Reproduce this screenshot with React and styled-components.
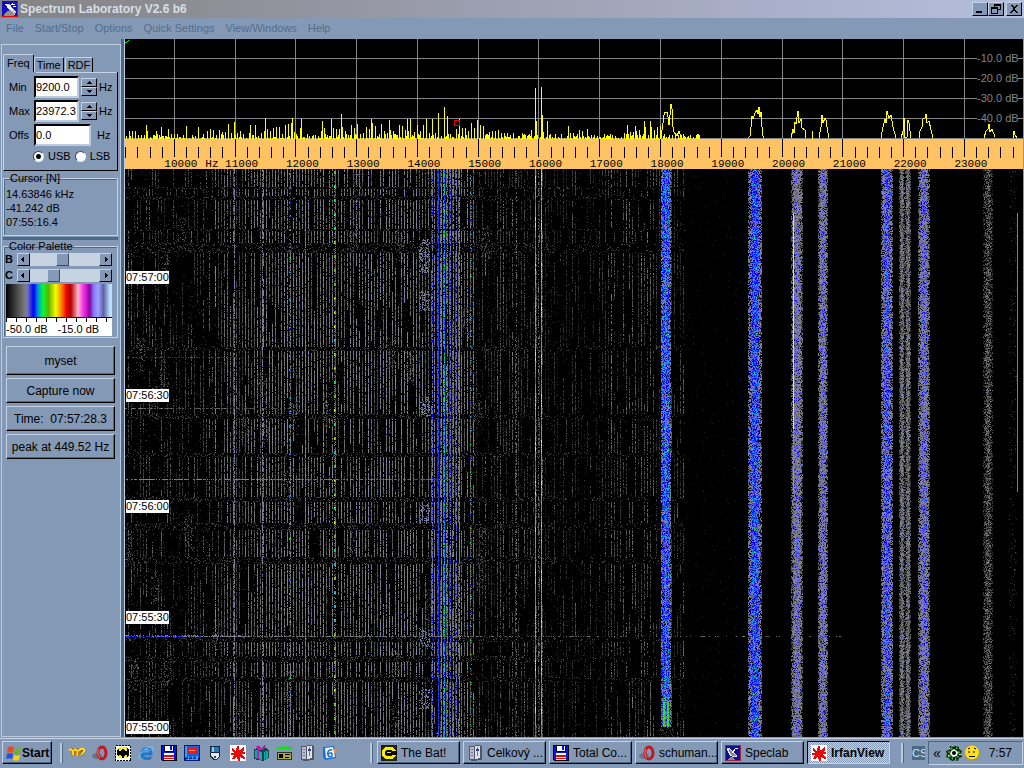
import { useMemo, useState } from 'react';
import styled, { createGlobalStyle } from 'styled-components';

const GlobalStyle = createGlobalStyle`
    * {
        box-sizing: border-box;
    }
    body {
        margin: 0;
        background: #8499b5;
        font-family: "Liberation Sans", Arial, sans-serif;
        font-size: 11px;
        color: black;
    }
    button, input {
        font-family: inherit;
        font-size: inherit;
        color: inherit;
    }
`

const Window = styled.div`
    min-height: 100vh;
    display: flex;
    flex-direction: column;
`
const TitleBar = styled.header`
    height: 18px;
    display: flex;
    align-items: center;
    padding: 0 2px;
    gap: 2px;
    background: linear-gradient(90deg, #848284, #b5bede);
`
const Title = styled.h1`
    margin: 0;
    flex: 1;
    font-size: 12px;
    line-height: 16px;
    color: #d6dfe7;
`
const Controls = styled.div`
    display: flex;
`
const ControlButton = styled.button`
    width: 16px;
    height: 14px;
    padding: 0;
    margin-left: ${ ({ $apart }) => ($apart ? 2 : 0) }px;
    display: flex;
    background: #8499b5;
    border: 1px solid;
    border-color: #c6d3e7 black black #c6d3e7;
`
const MenuBar = styled.nav`
    height: 21px;
    display: flex;
    align-items: center;
    gap: 11px;
    padding: 0 6px 2px;
`
const MenuItem = styled.button`
    padding: 0;
    border: 0;
    background: none;
    color: #526d8c;
    white-space: nowrap;
`
const Main = styled.main`
    flex: 1;
    display: flex;
`

/* ---------- side panel ---------- */

const Side = styled.aside`
    width: 125px;
    flex-shrink: 0;
    padding-right: 4px;
    background: linear-gradient(90deg, #8499b5 121px, #4a6984 121px, #4a6984 124px, #bdcbde 124px);
`
const Panel = styled.div`
    height: calc(100% - 5px);
    margin-left: 1px;
    margin-top: 5px;
    padding: 9px 2px 0 1px;
    border: 1px solid #bdcbde;
`
const Tabs = styled.div`
    display: flex;
    align-items: flex-end;
`
const Tab = styled.button`
    height: ${ ({ $active }) => ($active ? 18 : 15) }px;
    padding: ${ ({ $active }) => ($active ? '0 3px 2px' : '0 2px') };
    margin-right: ${ ({ $active }) => ($active ? 0 : 1) }px;
    border: 1px solid;
    border-color: #c6d3e7 black transparent #c6d3e7;
    border-bottom: 0;
    border-radius: 2px 2px 0 0;
    background: #8499b5;
`
const TabPage = styled.div`
    height: 99px;
    padding: 4px 0 0 5px;
    display: flex;
    flex-direction: column;
    gap: 2px;
    border-left: 1px solid #c6d3e7;
    border-right: 1px solid black;
    border-bottom: 1px solid black;
    background: linear-gradient(#c6d3e7, #c6d3e7) 32px 0 / 82px 1px no-repeat;
`
const Field = styled.div`
    height: 22px;
    display: flex;
    align-items: center;
`
const FieldLabel = styled.label`
    width: 25px;
`
const TextBox = styled.input`
    width: ${ ({ $wide }) => ($wide ? 57 : 45) }px;
    height: 22px;
    padding: 0 0 1px;
    background: white;
    border: 2px solid;
    border-color: black #bdcbde #bdcbde black;
    outline: 0;
`
const Spinner = styled.div`
    width: 16px;
    margin: 0 2px;
    display: flex;
    flex-direction: column;
`
const SpinButton = styled.button`
    height: 9px;
    padding: 0;
    display: flex;
    align-items: center;
    justify-content: center;
    background: #8499b5;
    border: 1px solid;
    border-color: #c6d3e7 black black #c6d3e7;
`
const Unit = styled.span`
    margin-left: ${ ({ $far }) => ($far ? 6 : 0) }px;
`
const RadioRow = styled.div`
    display: flex;
    gap: 4px;
    padding: 2px 0 0 24px;
`
const RadioLabel = styled.label`
    display: flex;
    align-items: center;
    gap: 4px;
`
const Radio = styled.input`
    appearance: none;
    width: 11px;
    height: 11px;
    margin: 0;
    border-radius: 50%;
    border: 1px solid;
    border-color: #39495a #e7efff #e7efff #39495a;
    background: ${ ({ checked }) => (checked ? 'radial-gradient(black 2px, white 3px)' : 'white') };
`
const Group = styled.fieldset`
    min-width: 0;
    margin: 0;
    padding: ${ ({ $tight }) => ($tight ? '0 5px 1px 1px' : '2px 2px 6px') };
    border: 1px solid #c6d3e7;
    box-shadow: inset 1px 1px 0 #4a6984;
`
const Legend = styled.legend`
    margin-left: 3px;
    padding: 0 1px;
    height: ${ ({ $tight }) => ($tight ? 10 : 14) }px;
    line-height: ${ ({ $tight }) => ($tight ? 10 : 14) }px;
`
const Readout = styled.p`
    margin: 0;
    line-height: 14px;
`
const Divider = styled.div`
    height: 3px;
    margin: 1px 0;
    background: #4a6984;
`
const SliderRow = styled.div`
    height: 16px;
    display: flex;
    align-items: center;
`
const SliderLabel = styled.label`
    width: 12px;
    font-weight: bold;
`
const ArrowButton = styled.button`
    width: 13px;
    height: 13px;
    padding: 0;
    display: flex;
    align-items: center;
    justify-content: center;
    background: #8499b5;
    border: 1px solid;
    border-color: #c6d3e7 black black #c6d3e7;
`
const Range = styled.input`
    appearance: none;
    flex: 1;
    min-width: 0;
    height: 13px;
    margin: 0;
    background: #c6d3e0;
    &::-webkit-slider-thumb {
        appearance: none;
        width: 13px;
        height: 13px;
        background: #8499b5;
        border: 1px solid;
        border-color: #c6d3e7 #39495a #39495a #c6d3e7;
    }
`
const PaletteStrip = styled.div`
    height: 33px;
    margin-top: 1px;
    margin-left: 1px;
    background: linear-gradient(90deg, #000, #777 17%, #7878b0 20%, #0000ff 26%, #0090e0 30%, #00ff30 35%, #60b000 40%, #f0ff00 47%, #ff7000 53%, #f00000 57%, #b00000 61%, #ffb8c8 68%, #ff40f0 72%, #9000a0 79%, #8080ff 83%, #a0a0ff 87%, #6060a0 92%, #b8e0ff 98%);
`
const PaletteScale = styled.div`
    height: 19px;
    margin-left: 1px;
    padding-top: 4px;
    display: flex;
    gap: 10px;
    line-height: 14px;
    white-space: nowrap;
    background: repeating-linear-gradient(90deg, black 0 1px, transparent 1px 10px) 0 0 / 100% 4px no-repeat white;
    border-top: 1px solid black;
`
const Actions = styled.div`
    display: flex;
    flex-direction: column;
    gap: 3px;
    padding: 8px 3px 0;
`
const ActionButton = styled.button`
    height: ${ ({ $tall }) => ($tall ? 29 : 25) }px;
    padding: 0;
    font-size: 12px;
    white-space: pre;
    background: #8499b5;
    border: 1px solid;
    border-color: #c6d3e7 black black #c6d3e7;
    box-shadow: inset -1px -1px 0 #4a6984;
`

/* ---------- plot ---------- */

const Plot = styled.section`
    flex: 1;
    min-width: 0;
    margin-right: 1px;
    display: flex;
    flex-direction: column;
    background: black;
`
const Chart = styled.svg`
    display: block;
    width: 100%;
    height: ${ ({ $height }) => $height }px;
    background: ${ ({ $back }) => $back };
    overflow: visible;
`
const DbText = styled.text`
    fill: #848484;
    font-size: 11px;
`
const HzText = styled.text`
    font-family: "Liberation Mono", "Courier New", monospace;
    font-size: 11px;
`
const Waterfall = styled.div`
    flex: 1;
    min-height: 568px;
    position: relative;
`
const WaterfallImage = styled.svg`
    display: block;
    width: 100%;
    height: 568px;
`
const Stamp = styled.time`
    position: absolute;
    left: 1px;
    height: 13px;
    line-height: 13px;
    background: white;
`

/* ---------- task bar ---------- */

const TaskBar = styled.footer`
    height: 31px;
    display: flex;
    align-items: center;
    padding: 0 1px 0 2px;
    background: linear-gradient(#8499b5 1px, #c6d3e7 1px, #c6d3e7 2px, #8499b5 2px);
`
const StartButton = styled.button`
    width: 50px;
    height: 23px;
    padding: 0 0 0 2px;
    display: flex;
    align-items: center;
    gap: 1px;
    font-size: 12px;
    font-weight: bold;
    background: #8499b5;
    border: 1px solid;
    border-color: #c6d3e7 black black #c6d3e7;
    box-shadow: inset -1px -1px 0 #4a6984;
`
const Grip = styled.div`
    width: 3px;
    height: 20px;
    margin: 0 ${ ({ $after }) => $after }px 0 ${ ({ $before }) => $before }px;
    background: #bdcbde;
    border-right: 1px solid #4a6984;
`
const QuickLaunch = styled.div`
    flex: 1;
    display: flex;
    gap: 7px;
`
const QuickButton = styled.button`
    width: 16px;
    height: 16px;
    padding: 0;
    border: 0;
    background: none;
`
const Tasks = styled.div`
    display: flex;
    gap: 3px;
`
const TaskButton = styled.button`
    width: 83px;
    height: 23px;
    padding: 0 3px;
    display: flex;
    align-items: center;
    gap: 4px;
    font-size: 12px;
    font-weight: ${ ({ $active }) => ($active ? 'bold' : 'normal') };
    white-space: nowrap;
    background: ${ ({ $active }) => ($active ? 'repeating-conic-gradient(#c6d3e0 0 25%, #8499b5 0 50%) 0 0 / 2px 2px' : '#8499b5') };
    border: 1px solid;
    border-color: ${ ({ $active }) => ($active ? 'black #c6d3e7 #c6d3e7 black' : '#c6d3e7 black black #c6d3e7') };
    box-shadow: ${ ({ $active }) => ($active ? 'none' : 'inset -1px -1px 0 #4a6984') };
`
const Language = styled.span`
    width: 13px;
    height: 14px;
    margin-right: 3px;
    overflow: hidden;
    line-height: 14px;
    color: #dbe5f0;
    background: #4a6984;
`
const Tray = styled.div`
    width: 95px;
    height: 24px;
    padding: 0 10px 0 4px;
    display: flex;
    align-items: center;
    gap: 2px;
    border: 1px solid;
    border-color: #4a6984 #c6d3e7 #c6d3e7 #4a6984;
`
const Chevron = styled.span`
    width: 11px;
    font-size: 14px;
    line-height: 14px;
`
const Clock = styled.time`
    margin-left: auto;
    font-size: 12px;
`
const IconBox = styled.svg`
    display: block;
    flex-shrink: 0;
    shape-rendering: crispEdges;
`

/* ---------- icons ---------- */

const Glyphs = {
    dish: (
        <>
            <path fill="#1010d0" d="M0 0h16v16H0z" />
            <path fill="#f00000" d="M0 15h15V0h1v16H0z" />
            <path fill="#101010" d="M2 2h4l3 3 1 4-4-1-3-3z" />
            <path fill="#c8c8c8" d="M5 3h3l1 2 5 6-1 3h-2L8 9 5 7z" />
            <path fill="#f4f4f4" d="M3 3l3 1 5 5-1 1-5-4z" />
            <path fill="#909088" d="M5 10l3-1 4 4v2H2v-2z" />
            <path stroke="#fff" d="M7 6l4-4M10 3h3M11 5h3" />
        </>
    ),
    speclab: (
        <>
            <path fill="#101090" stroke="#a02040" d="M.5 .5h15v15h-15z" />
            <path fill="#e8e8e8" d="M2 3h2l8 7v2c-5 1-10-2-10-9z" />
            <path fill="#888" d="M4 4l8 7H8C5 10 4 7 4 4zM5 12h3l2 3H3z" />
            <path stroke="#fff" d="M7 8l4-5M10 3h3" />
        </>
    ),
    flag: (
        <g shapeRendering="auto">
            <path fill="#e84b20" d="M3 2c2-1 4-1 6 0L8 8c-2-1-4-1-6 0z" />
            <path fill="#70b030" d="M10 3c2 1 4 1 6 0l-1 6c-2 1-4 1-6 0z" />
            <path fill="#2050e0" d="M2 9c2-1 4-1 6 0l-1 5c-2-1-4-1-6 0z" />
            <path fill="#f8d020" d="M9 10c2 1 4 1 6 0l-1 5c-2 1-4 1-6 0z" />
        </g>
    ),
    crown: (
        <g shapeRendering="auto" fill="none">
            <path stroke="#a03010" strokeWidth="3" d="M1 5c3-1 4 1 3 5M6 5c3-1 4 1 2 6M11 5c3-1 4 1 1 5" />
            <path stroke="#ffe800" strokeWidth="2" d="M0 6c0-3 5-2 4 4M5 6c1-3 5-2 3 5M10 6c1-3 6-3 5 0l-3 4" />
        </g>
    ),
    opera: (
        <g shapeRendering="auto">
            <ellipse cx="5" cy="11" rx="5" ry="3" fill="#555e70" opacity=".6" />
            <ellipse cx="10" cy="8" rx="4" ry="6" fill="none" stroke="#c01820" strokeWidth="3" />
            <path fill="none" stroke="#ff8080" d="M7 4c-2 3-1 7 1 9" />
        </g>
    ),
    bat: (
        <>
            <path fill="#fff" stroke="#000" strokeDasharray="2 1" d="M.5 .5h15v15h-15z" />
            <path fill="#f8f000" d="M4 2h8l2 3v5l-2 3H4l-2-3V5z" />
            <path d="M2 5l2-2v3h2l1-2h2l1 2h2V3l2 2v5l-2 2v-2h-2l-2 4-2-4H4v2l-2-2z" />
        </>
    ),
    ie: (
        <g shapeRendering="auto">
            <path fill="none" stroke="#1c78d0" strokeWidth="3" d="M4 9h9c0-7-9-7-9 0 0 5 7 6 9 3" />
            <path fill="none" stroke="#70c8ff" strokeWidth="1" d="M1 14c-2-3 5-11 11-12 3-1 4 1 2 4M4 8c1-4 6-5 8-2" />
        </g>
    ),
    floppy: (
        <>
            <path d="M0 0h16v16H1l-1-1z" />
            <path fill="#0018e0" d="M1 1h14v14H1z" />
            <path fill="#fff" d="M4 1h8v5H4zM3 8h10v7H3z" />
            <path fill="#0018e0" d="M9 1h2v4H9z" />
            <path d="M3 1h1v6H3zM12 1h1v6h-1zM3 6h10v1H3z" />
            <path fill="#f00000" d="M3 10h10v2H3zM3 13h10v1H3z" />
        </>
    ),
    monitor: (
        <>
            <path fill="#081878" d="M0 0h16v16H0z" />
            <path fill="#1060e0" d="M1 1h14v12H1z" />
            <path fill="#38a0f0" d="M1 1h2v11H1zM4 11h1v4H4zM8 11h1v4H8zM12 11h2v4h-2zM2 14h12v1H2z" />
            <path fill="#f01810" d="M4 3h9v6H4z" />
            <path fill="#ff9080" d="M5 5h6v1H5z" />
        </>
    ),
    plug: (
        <>
            <path fill="#182838" d="M3 1h10v10l-3 4H6l-3-4z" />
            <path fill="#2878b8" d="M4 2h8v5H4z" />
            <path fill="#80d0f0" d="M5 2h2v5H5z" />
            <path fill="#e0e8f0" d="M4 8h8v3l-3 3H7l-3-3z" />
            <path fill="#304050" d="M7 11h2v2H7z" />
        </>
    ),
    splat: (
        <>
            <path fill="#fff" d="M0 0h16v16H0z" />
            <path fill="#e80808" d="M7 1h2v4h2l2-3h1v3l-2 2h3v2h-3l1 2 2 2-1 1-4-2v4H8l-1-4-3 2H2l2-4H1V8h3L2 5V3l4 3z" />
        </>
    ),
    gift: (
        <>
            <path fill="#104848" d="M1 4l4-1h8l3 2v8l-6 3-9-2z" />
            <path fill="#18a8a8" d="M2 5l7 2v8l-7-2zM11 7l4-1v7l-4 2z" />
            <path fill="#c018b0" d="M4 5h2v9H4zM12 6h1v8h-1zM3 1h4l1 2 3-3 2 2-4 3H5z" />
        </>
    ),
    radio: (
        <>
            <path fill="#303020" d="M1 7h15v8H1z" />
            <path fill="#a8a840" d="M2 8h13v6H2z" />
            <path d="M3 9h4v4H3zM9 9h5v1H9zM9 12h4v1H9z" />
            <path fill="none" stroke="#10e010" strokeWidth="2" d="M0 4l3-1 2 1 2-2 2 2 2-2 2 2 3-2" />
        </>
    ),
    book: (
        <>
            <path fill="#505868" d="M2 1l11-1 2 1v14l-10 1-3-1z" />
            <path fill="#b8bccc" d="M3 2h4v12H3z" />
            <path fill="#e0e4ee" d="M8 1h5v12l-5 1z" />
            <path fill="#707890" d="M4 4h2v1H4zM4 7h2v1H4zM4 10h2v1H4zM10 2h1v9h-1z" />
            <path fill="#304080" d="M9 4h3v2H9z" />
        </>
    ),
    outlook: (
        <g shapeRendering="auto">
            <path fill="#1c70d0" d="M1 2l11-1 2 12-11 2-2-3z" />
            <path fill="#e8f4ff" d="M3 3l8-1 2 10-9 1z" />
            <path fill="none" stroke="#2070d0" strokeWidth="1.5" d="M10 5c-3-1-5 2-4 5s5 2 4-1-2 0-4 0" />
            <path fill="#f09030" d="M12 4l4 1-4 4z" />
        </g>
    ),
    thebat: (
        <>
            <path fill="#202010" d="M0 0h16v16H0z" />
            <ellipse cx="8" cy="8" rx="6" ry="5" fill="none" stroke="#f8f000" strokeWidth="3" />
            <path d="M12 6h4v4h-4z" />
            <path d="M4 7h2l1-2h2l1 2h2v2l-2 1H6L4 9z" />
            <path fill="#d8d890" d="M6 7h4v1H6z" />
        </>
    ),
    flower: (
        <g shapeRendering="auto">
            <path fill="#082808" d="M4 1l3 1 2-1 4 1v2l3 2-1 3 1 3-3 1-1 3-3-1-2 1-3-1-1-2-3-1 1-3-1-3 3-1z" />
            <path fill="#38c028" d="M5 2l2 2-3 1zM10 2l2 1-2 2zM1 7l3-1v2zM12 6l3 1-3 2zM1 12l3-3 1 3zM11 11l3 1-3 1zM5 13l2-1v3zM9 12l2 3H9z" />
            <path fill="#fff" d="M5 6l3-2 4 3-1 4-4 1-3-3zM3 3h1v1H3zM13 9h2v1h-2zM2 10h1v1H2z" />
            <circle cx="8" cy="8" r="2" />
        </g>
    ),
    smiley: (
        <g shapeRendering="auto">
            <circle cx="8" cy="8" r="7.5" fill="#b09000" />
            <circle cx="8" cy="7.500" r="7" fill="#ffdf20" />
            <path fill="none" stroke="#000" d="M4 4l2-1M10 3l2 1M5 6v2M10 6v2M5 11.500h6" />
        </g>
    ),
}

function Icon ({ name }) {
    return <IconBox width="16" height="16" viewBox="0 0 16 16" aria-hidden="true">{ Glyphs[name] }</IconBox>
}

/* ---------- signal data ---------- */

const WIDTH = 898
const ROWS = 568
const START_HZ = 9188
const SPAN_HZ = 14776

// small seeded generator so that every load shows the same signal
function makeRandom (seed) {
    let s = seed
    return () => {
        s = (s * 1664525 + 1013904223) >>> 0
        return s / 4294967296
    }
}

const hzToX = (hz) => ((hz - START_HZ) / SPAN_HZ) * 100 + '%'

const PEAKS = [
    [21, 14], [36, 12], [61, 13], [73, 12], [103, 15], [109, 17], [125, 14], [140, 21], [167, 21], [176, 20],
    [197, 18], [206, 20], [216, 25], [246, 20], [264, 19], [282, 20], [285, 20], [301, 20], [307, 20], [313, 26],
    [319, 32], [322, 23], [334, 20], [346, 16], [352, 19], [410, 51], [416, 52], [411, 18], [417, 24], [422, 18],
    [443, 13], [462, 10], [510, 13], [519, 18], [525, 18], [188, 4], [687, 8],
]

const HILLS = [
    '536,99 538,84 539,76 540,73 542,73 543,78 544,86 545,76 546,65 547,70 548,88 549,93 552,97 554,92 556,98',
    '623,99 625,97 626,88 627,77 628,80 630,74 632,71 633,75 634,68 635,78 636,73 637,88 638,97 639,99',
    '666,99 668,90 669,94 670,83 671,85 672,78 673,72 674,84 676,80 677,89 680,91 680,99',
    '694,99 696,88 697,76 698,84 700,79 701,81 702,88 704,99',
    '756,99 758,88 760,80 761,84 762,72 764,79 766,76 768,88 771,99',
    '776,99 778,92 779,79 780,99 782,98 783,81 784,84 786,99',
    '794,99 795,92 797,88 798,80 800,79 801,75 802,84 804,82 806,91 808,99',
    '859,99 861,92 863,90 864,85 865,93 867,90 870,98',
    '888,99 889,92 890,96 892,99',
]

function buildBars () {
    const rnd = makeRandom(11)
    let d = ''
    for (let x = 0; x < 575; x += 1) {
        const level = x < 130 ? 9 : x < 360 ? 14 : x < 460 ? 8 : x < 500 ? 5 : 12
        const r = rnd()
        const h = x % 3 === 1 ? Math.floor(1 + r * level * (x > 535 ? 0.3 : 1.1)) : Math.floor(r * r * r * 6)
        if (h > 0) d += `M${ x + 0.5 } 100v${ -h }`
    }
    PEAKS.forEach(([x, h]) => {
        d += `M${ x + 0.5 } 100v${ -h }`
    })
    return d
}

const LEVELS = [
    '', '#1c1c1c', '#313131', '#4a4a4a', '#636363', '#7b7b7b', '#8484a8', '#7373c6', '#3939e7', '#0000ff',
    '#0063ff', '#00b5e7', '#00f752', '#5abd00', '#e7f700', '#ff8c00',
]

// time spans in which the comb lines drop out
const GAPS = [[18, 20], [27, 31], [60, 62], [74, 84], [178, 182], [245, 250], [284, 288], [328, 333], [354, 361], [388, 395], [468, 473], [487, 493], [508, 513]]

// centre, half width, strength of the transmitter bands
const BANDS = [
    [539, 2, 9.6], [543, 2, 9.8], [630, 6, 9.4], [672, 5, 6.8], [698, 4, 7.2], [762, 5, 8.4], [777, 2, 4.9], [783, 2, 4.9],
    [799, 5, 7.4], [863, 4, 3.4], [888, 3, 0.8],
]

function buildWaterfall () {
    const rnd = makeRandom(77)
    const grid = new Uint8Array(WIDTH * ROWS)
    const put = (x, y, v) => {
        if (x >= 0 && x < WIDTH && y >= 0 && y < ROWS && v > 0) grid[y * WIDTH + x] = Math.min(15, Math.floor(v))
    }
    const inGap = (y) => GAPS.some(([a, b]) => y >= a && y < b)

    // faint speckle
    for (let y = 0; y < ROWS; y++) {
        const gap = inGap(y)
        for (let x = 0; x < 560; x++) {
            const dense = x < 430 ? 1 : 0.5
            if (rnd() < (gap ? 0.2 : 0.03) * dense) put(x, y, 1 + rnd() * (gap ? 3 : 2))
        }
        if (rnd() < 0.5) put(Math.floor(560 + rnd() * 60), y, 1 + rnd())
    }

    // comb lines, one each 50 Hz
    for (let x = 3; x < 560; x += 3) {
        const low = x < 90
        const high = x > 350
        const strength = (low ? 2.6 : x < 130 ? 3.7 : high ? (x < 425 ? 2.7 : x < 480 ? 1.6 : 2.8) : 4.6) + rnd() * 2 - 1
        const odds = low ? 0.48 : high ? 0.65 : 0.84
        let on = true
        let rest = 0
        let base = 0
        for (let y = 0; y < ROWS; y++) {
            if (inGap(y)) {
                rest = 0
                continue
            }
            if (rest <= 0) {
                on = rnd() < odds
                rest = 8 + rnd() * 50
                base = strength + rnd() * 1.8 - 1
            }
            rest--
            if (on && rnd() < (low || high ? 0.7 : 0.86)) put(x, y, base + rnd() * 2.2 - 0.8)
        }
    }

    // drifting clouds
    for (let i = 0; i < 34; i++) {
        const cx = rnd() * 400
        const cy = rnd() * ROWS
        for (let n = 0; n < 70; n++) put(Math.floor(cx + rnd() * 9), Math.floor(cy + rnd() * 34), 1.5 + rnd() * 3)
    }
    for (const cy of [70, 84, 122, 228, 335, 460, 520]) {
        for (let n = 0; n < 80; n++) put(294 + Math.floor(rnd() * 11), Math.floor(cy + rnd() * 20), 4 + rnd() * 4)
    }

    // lone carriers
    const carrier = (x, low, high, odds) => {
        for (let y = 0; y < ROWS; y++) if (rnd() < odds) put(x, y, low + rnd() * (high - low))
    }
    carrier(109, 4, 7.5, 0.75)
    carrier(137, 4, 7.5, 0.75)
    carrier(180, 4, 9, 0.8)
    carrier(307, 5, 10, 0.85)
    carrier(313, 8, 11, 0.98)
    carrier(316, 6, 8, 0.85)
    carrier(319, 9.5, 12.4, 1)
    carrier(322, 6, 9.8, 0.9)
    carrier(325, 6, 9.8, 0.9)
    carrier(328, 5, 8.5, 0.8)
    carrier(331, 5, 9, 0.8)
    carrier(334, 5, 8, 0.8)
    carrier(375, 2, 5, 0.5)
    carrier(391, 3, 6, 0.45)
    carrier(413, 3, 6, 0.5)
    carrier(668, 0, 3, 0.7)
    for (let y = 0; y < ROWS; y++) {
        const wave = Math.sin(y / 7) * 1.6
        put(410, y, 12.5 + wave + rnd() * 2 - 1)
        put(416, y, 12.7 + wave + rnd() * 2 - 1)
    }

    // keyed signals that repeat each 14 rows
    for (let y = 2; y < ROWS; y += 14) {
        for (let k = 0; k < 3; k++) {
            put(209, y + k, 11 + rnd() * 4)
            put(210, y + k, 11 + rnd() * 3)
            if (k < 2) {
                put(164, y + k + 2, 8 + rnd() * 6)
                put(165, y + k + 2, 6 + rnd() * 7)
                put(345, y + k + 6, 9 + rnd() * 5)
            }
        }
        for (let k = 3; k < 14; k++) {
            if (rnd() < 0.6) put(209 + (k % 2), y + k, 4 + rnd() * 4)
            if (rnd() < 0.4) put(164 + (k % 2), y + k, 3 + rnd() * 4)
            if (rnd() < 0.5) put(345 + (k % 2), y + k, 3 + rnd() * 3)
        }
    }

    // bursts over the whole low range
    const burst = (y, until, base, odds) => {
        for (let x = 0; x < until; x++) if (rnd() < odds) put(x, y, base + rnd() * 3 - (x / until) * base * 0.6)
    }
    burst(188, 150, 2, 0.5)
    burst(239, 170, 3.6, 0.6)
    burst(310, 330, 5.4, 0.7)
    burst(467, 130, 8, 0.85)
    for (let x = 130; x < 720; x++) if (rnd() < (x < 360 ? 0.7 : 0.25)) put(x, 467, 3 + rnd() * 3)
    for (let x = 0; x < 140; x++) if (rnd() < 0.35) put(x, 466, 4 + rnd() * 4)

    // transmitters
    BANDS.forEach(([cx, half, power]) => {
        for (let y = 0; y < ROWS; y++) {
            for (let x = cx - half - 1; x <= cx + half; x++) {
                const off = Math.abs(x + 0.5 - cx) / (half + 1)
                const v = power - off * off * power * 0.5 + (rnd() + rnd() - 1) * 3.4
                if (rnd() > off * off * 0.5 && rnd() < power / 4) put(x, y, v)
            }
        }
    })
    for (let y = 533; y < 558; y++) {
        for (const x of [538, 539, 542, 543]) put(x, y, 12 + rnd() * 1.9)
    }
    for (let y = 558; y < ROWS; y++) {
        for (let x = 535; x < 549; x++) {
            grid[y * WIDTH + x] = 0
            if (rnd() < 0.3) put(x, y, 1 + rnd() * 3)
        }
    }
    for (let y = 44; y < 323; y++) {
        put(668, y, y < 260 ? 14 : y < 300 ? 13 : 12)
        put(892, y, y < 250 ? 8 - rnd() * 1.5 : 5 + rnd())
    }

    const paths = LEVELS.map(() => [])
    for (let x = 0; x < WIDTH; x++) {
        let y = 0
        while (y < ROWS) {
            const v = grid[y * WIDTH + x]
            let end = y + 1
            while (end < ROWS && grid[end * WIDTH + x] === v) end++
            if (v) paths[v].push(`M${ x } ${ y }h1v${ end - y }h-1z`)
            y = end
        }
    }
    return paths.map((list) => list.join(''))
}

const MAJOR = Array.from({ length: 14 }, (_, i) => 10000 + i * 1000)
const MINOR = Array.from({ length: 74 }, (_, i) => 9200 + i * 200)
const STAMPS = [['07:57:00', 102], ['07:56:30', 220], ['07:56:00', 331], ['07:55:30', 442], ['07:55:00', 552]]

function Spectrum () {
    const bars = useMemo(buildBars, [])
    return (
        <Chart $height={ 100 } $back="black" shapeRendering="crispEdges">
            { [19, 39, 59, 79, 99].map((y) => (
                <line key={ y } x1="0" x2="100%" y1={ y + 0.5 } y2={ y + 0.5 } stroke="#848484" />
            )) }
            { MAJOR.map((hz) => (
                <line key={ hz } x1={ hzToX(hz) } x2={ hzToX(hz) } y1="0" y2="100" stroke="#848484" />
            )) }
            <svg width="100%" height="100" viewBox={ `0 0 ${ WIDTH } 100` } preserveAspectRatio="none">
                <path d={ bars } stroke="#ff0" />
                { HILLS.map((points) => (
                    <polyline key={ points } points={ points } fill="none" stroke="#ff0" />
                )) }
                <path d="M0 3h2l2-2" stroke="#00ff00" fill="none" />
                <circle cx="332" cy="84" r="3" fill="none" stroke="#f00000" />
            </svg>
            <svg x="100%" overflow="visible">
                { [10, 20, 30, 40].map((db, i) => (
                    <g key={ db }>
                        <rect x="-46" y={ 13 + i * 20 } width="41" height="12" fill="black" />
                        <DbText x="-46" y={ 23 + i * 20 }>{ `-${ db }.0 dB` }</DbText>
                    </g>
                )) }
            </svg>
        </Chart>
    )
}

function FrequencyScale () {
    return (
        <Chart $height={ 30 } $back="#ffc363" shapeRendering="crispEdges">
            { MINOR.filter((hz) => hz < START_HZ + SPAN_HZ).map((hz) => (
                <line key={ hz } x1={ hzToX(hz) } x2={ hzToX(hz) } y1={ hz % 1000 ? 8 : 0 } y2={ hz % 1000 ? 19 : 18 } stroke="black" />
            )) }
            { MAJOR.map((hz) => (
                <HzText key={ hz } x={ hzToX(hz) } dx="-10" y="28">{ hz }</HzText>
            )) }
            <HzText x={ hzToX(10000) } dx="31" y="28">Hz</HzText>
        </Chart>
    )
}

function WaterfallView () {
    const paths = useMemo(buildWaterfall, [])
    return (
        <Waterfall>
            <WaterfallImage viewBox={ `0 0 ${ WIDTH } ${ ROWS }` } preserveAspectRatio="none" shapeRendering="crispEdges">
                { paths.map((d, i) => d && <path key={ i } d={ d } fill={ LEVELS[i] } />) }
            </WaterfallImage>
            { STAMPS.map(([time, top]) => (
                <Stamp key={ time } style={ { top } }>{ time }</Stamp>
            )) }
        </Waterfall>
    )
}

function Arrow ({ d }) {
    return (
        <svg width="7" height="7" viewBox="0 0 7 7" shapeRendering="crispEdges">
            <path d={ d } />
        </svg>
    )
}

function FrequencyField ({ id, label, value, change }) {
    return (
        <Field>
            <FieldLabel htmlFor={ id }>{ label }</FieldLabel>
            <TextBox id={ id } value={ value } onChange={ (e) => change(e.target.value) } />
            <Spinner>
                <SpinButton aria-label={ `${ label } up` }><Arrow d="M3 2h1v1h1v1h1v1H1V4h1V3h1z" /></SpinButton>
                <SpinButton aria-label={ `${ label } down` }><Arrow d="M1 2h5v1H5v1H4v1H3V4H2V3H1z" /></SpinButton>
            </Spinner>
            <Unit>Hz</Unit>
        </Field>
    )
}

function PaletteSlider ({ label, value, change }) {
    return (
        <SliderRow>
            <SliderLabel htmlFor={ label }>{ label }</SliderLabel>
            <ArrowButton aria-label={ `${ label } less` }><Arrow d="M4 1v5H3V5H2V4H1V3h1V2h1V1z" /></ArrowButton>
            <Range id={ label } type="range" min={ 0 } max={ 100 } value={ value } onChange={ (e) => change(Number(e.target.value)) } />
            <ArrowButton aria-label={ `${ label } more` }><Arrow d="M3 1h1v1h1v1h1v1H5v1H4v1H3z" /></ArrowButton>
        </SliderRow>
    )
}

function SidePanel () {
    const [min, setMin] = useState('9200.0')
    const [max, setMax] = useState('23972.3')
    const [offs, setOffs] = useState('0.0')
    const [band, setBand] = useState('USB')
    const [brightness, setBrightness] = useState(46)
    const [contrast, setContrast] = useState(30)

    return (
        <Side>
            <Panel>
                <Tabs>
                    <Tab $active>Freq</Tab>
                    <Tab>Time</Tab>
                    <Tab>RDF</Tab>
                </Tabs>
                <TabPage>
                    <FrequencyField id="min" label="Min" value={ min } change={ setMin } />
                    <FrequencyField id="max" label="Max" value={ max } change={ setMax } />
                    <Field>
                        <FieldLabel htmlFor="offs">Offs</FieldLabel>
                        <TextBox $wide id="offs" value={ offs } onChange={ (e) => setOffs(e.target.value) } />
                        <Unit $far>Hz</Unit>
                    </Field>
                    <RadioRow>
                        { ['USB', 'LSB'].map((name) => (
                            <RadioLabel key={ name }>
                                <Radio type="radio" name="band" checked={ band === name } onChange={ () => setBand(name) } />
                                { name }
                            </RadioLabel>
                        )) }
                    </RadioRow>
                </TabPage>
                <Group>
                    <Legend>Cursor [N]</Legend>
                    <Readout>14.63846 kHz</Readout>
                    <Readout>-41.242 dB</Readout>
                    <Readout>07:55:16.4</Readout>
                </Group>
                <Divider />
                <Group $tight>
                    <Legend $tight>Color Palette</Legend>
                    <PaletteSlider label="B" value={ brightness } change={ setBrightness } />
                    <PaletteSlider label="C" value={ contrast } change={ setContrast } />
                    <PaletteStrip />
                    <PaletteScale>
                        <span>-50.0 dB</span>
                        <span>-15.0 dB</span>
                    </PaletteScale>
                </Group>
                <Actions>
                    <ActionButton $tall>myset</ActionButton>
                    <ActionButton>Capture now</ActionButton>
                    <ActionButton>{ 'Time:  07:57:28.3' }</ActionButton>
                    <ActionButton>peak at 449.52 Hz</ActionButton>
                </Actions>
            </Panel>
        </Side>
    )
}

const MENU = ['File', 'Start/Stop', 'Options', 'Quick Settings', 'View/Windows', 'Help']
const QUICK = ['crown', 'opera', 'bat', 'ie', 'floppy', 'monitor', 'plug', 'splat', 'gift', 'radio', 'book', 'outlook']
const TASKS = [
    ['thebat', 'The Bat!'], ['book', 'Celkový ...'], ['floppy', 'Total Co...'],
    ['opera', 'schuman...'], ['speclab', 'Speclab'], ['splat', 'IrfanView'],
]
const CONTROLS = [
    ['Minimize', 'M3 8h6v2H3z'],
    ['Restore', 'M5 1h7v6H9v4H2V4h3zM6 3v1h3v2h2V3zM3 6v4h5V6z'],
    ['Close', 'M3 2h2l2 2 2-2h2L8 5v1l3 4H9L7 7l-2 3H3l3-4V5z'],
]

function App () {
    return (
        <>
            <GlobalStyle />
            <Window>
                <TitleBar>
                    <Icon name="dish" />
                    <Title>Spectrum Laboratory V2.6 b6</Title>
                    <Controls>
                        { CONTROLS.map(([name, d]) => (
                            <ControlButton key={ name } $apart={ name === 'Close' } aria-label={ name }>
                                <svg width="14" height="12" viewBox="0 0 14 12" shapeRendering="crispEdges">
                                    <path d={ d } fillRule="evenodd" />
                                </svg>
                            </ControlButton>
                        )) }
                    </Controls>
                </TitleBar>
                <MenuBar>
                    { MENU.map((item) => <MenuItem key={ item }>{ item }</MenuItem>) }
                </MenuBar>
                <Main>
                    <SidePanel />
                    <Plot>
                        <Spectrum />
                        <FrequencyScale />
                        <WaterfallView />
                    </Plot>
                </Main>
                <TaskBar>
                    <StartButton><Icon name="flag" />Start</StartButton>
                    <Grip $before={ 8 } $after={ 6 } />
                    <QuickLaunch>
                        { QUICK.map((name) => (
                            <QuickButton key={ name } aria-label={ name }><Icon name={ name } /></QuickButton>
                        )) }
                    </QuickLaunch>
                    <Grip $before={ 0 } $after={ 4 } />
                    <Tasks>
                        { TASKS.map(([icon, name]) => (
                            <TaskButton key={ name } $active={ name === 'IrfanView' }><Icon name={ icon } />{ name }</TaskButton>
                        )) }
                    </Tasks>
                    <Grip $before={ 11 } $after={ 8 } />
                    <Language>CS</Language>
                    <Tray>
                        <Chevron>«</Chevron>
                        <Icon name="flower" />
                        <Icon name="smiley" />
                        <Clock>7:57</Clock>
                    </Tray>
                </TaskBar>
            </Window>
        </>
    )
}

export default App
